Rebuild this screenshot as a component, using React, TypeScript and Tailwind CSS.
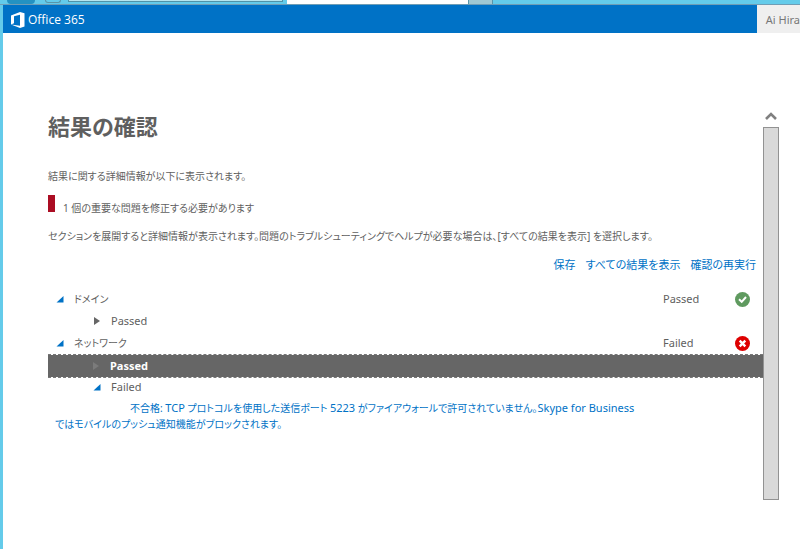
import React from 'react';

function Expander({ open, className }: { open: boolean; className: string }) {
  return (
    <svg viewBox="0 0 8 8" className={`h-2 w-2 shrink-0 ${className}`} aria-hidden="true">
      {open ? <path d="M7.5 1V7.5H0.5Z" fill="currentColor" /> : <path d="M1 0V8L7 4Z" fill="currentColor" />}
    </svg>
  );
}

function StatusIcon({ passed }: { passed: boolean }) {
  return (
    <svg viewBox="0 0 15 15" className="h-[15px] w-[15px]" aria-hidden="true">
      <circle cx="7.5" cy="7.5" r="7.5" fill={passed ? '#5f9a5f' : '#de0000'} />
      {passed ? (
        <path d="M4 7.3L6.7 9.8L11 5" fill="none" stroke="#fff" strokeWidth="2" />
      ) : (
        <path d="M4.7 4.7L10.3 10.3M10.3 4.7L4.7 10.3" fill="none" stroke="#fff" strokeWidth="2.4" />
      )}
    </svg>
  );
}

function SectionRow({ title, passed }: { title: string; passed: boolean }) {
  return (
    <div className="flex h-[22px] items-center pl-2">
      <button type="button" aria-expanded="true" className="flex flex-1 items-center gap-2.5">
        <Expander open className="text-[#0072c6]" />
        <span className="text-[10px]">{title}</span>
      </button>
      <span className="w-[72px]">{passed ? 'Passed' : 'Failed'}</span>
      <span className="w-7">
        <StatusIcon passed={passed} />
      </span>
    </div>
  );
}

export default function App() {
  return (
    <div className="min-h-screen bg-[#64cbea] font-['Noto_Sans','Noto_Sans_CJK_JP',sans-serif] text-[11px] leading-4 text-[#5f5f5f]">
      {/* Browser toolbar edge */}
      <div className="flex h-[5px] items-start overflow-hidden border-b border-[#6f9db5]">
        <div className="ml-[7px] h-1 w-7 rounded-b-full bg-[#2492c2]" />
        <div className="ml-2.5 h-[3px] w-4 rounded-b-full border border-t-0 border-[#5795aa]" />
        <div className="ml-[7px] h-0.5 w-[215px] border-x border-b border-[#4f93a8] bg-[#b5e4ee]" />
        <div className="ml-1 h-1 w-[181px] bg-white" />
        <div className="h-1 w-[25px] border-x border-[#5795aa] bg-[#9fc8d3]" />
      </div>

      <div className="ml-[3px] min-h-[calc(100vh-5px)] bg-white">
        <header className="flex h-7 items-stretch bg-[#0072c6] text-white">
          <a href="#" className="flex flex-1 items-center gap-[3px] pt-0.5 pl-2">
            <svg viewBox="0 0 14 16" className="h-4 w-3.5" aria-hidden="true">
              <path
                d="M0 3.4L9 0L13.5 1.3V14.6L9 16L0 12.6L9 13.7V2.8L3 4.2V11.2L0 12.6Z"
                fill="currentColor"
              />
            </svg>
            <span className="font-['Open_Sans',sans-serif] text-[12px]">Office 365</span>
          </a>
          <button
            type="button"
            className="bg-[#efefef] pt-0.5 pl-[9px] text-left text-[11px] whitespace-nowrap text-[#777777]"
          >
            Ai Hira
          </button>
        </header>

        <div className="flex pt-[76px] pr-[21px] pl-[45px]">
          <main className="min-w-0 flex-1 [font-feature-settings:'palt']">
            <h1 className="text-[22px] leading-[34px] font-bold">結果の確認</h1>
            <div className="text-[10px]">
              <p className="mt-[25px]">結果に関する詳細情報が以下に表示されます。</p>
              <div className="mt-[11px] flex items-start gap-2">
                <span className="h-[17px] w-[7px] bg-[#ab0d23]" />
                <p className="pt-[5px]">1 個の重要な問題を修正する必要があります</p>
              </div>
              <p className="mt-3">
                セクションを展開すると詳細情報が表示されます。問題のトラブルシューティングでヘルプが必要な場合は、[すべての結果を表示] を選択します。
              </p>
            </div>
            <div className="mt-[13px] flex justify-end gap-2.5 pr-[7px] text-[#0072c6]">
              <button type="button">保存</button>
              <button type="button">すべての結果を表示</button>
              <button type="button">確認の再実行</button>
            </div>

            <div className="mt-[15px]">
              <SectionRow title="ドメイン" passed />
              <button type="button" aria-expanded="false" className="flex h-[22px] w-full items-center gap-2.5 pl-[45px]">
                <Expander open={false} className="text-[#666666]" />
                <span>Passed</span>
              </button>
              <SectionRow title="ネットワーク" passed={false} />
              <button
                type="button"
                aria-expanded="false"
                className="flex h-6 w-full items-center gap-2.5 border-y border-dashed border-[#777777] bg-[#666666] bg-clip-padding pl-11 font-bold text-white"
              >
                <Expander open={false} className="text-[#7b7b7b]" />
                <span>Passed</span>
              </button>
              <button type="button" aria-expanded="true" className="flex h-[18px] w-full items-center gap-2.5 pl-[45px]">
                <Expander open className="text-[#0072c6]" />
                <span>Failed</span>
              </button>
              <a href="#" className="mt-1 block pr-[100px] pl-[7px] indent-[75px] text-[10px] text-[#0072c6]">
                不合格: <span className="text-[11px]">TCP</span> プロトコルを使用した送信ポート{' '}
                <span className="text-[11px]">5223</span> がファイアウォールで許可されていません。
                <span className="text-[11px]">Skype for Business</span>
                <br />
                ではモバイルのプッシュ通知機能がブロックされます。
              </a>
            </div>
          </main>

          <div className="flex w-4 flex-col items-center">
            <button type="button" aria-label="Scroll up" className="flex h-[18px] items-start pt-0.5">
              <svg viewBox="0 0 12 10" className="h-2.5 w-3" aria-hidden="true">
                <path d="M1 8L6 3L11 8" fill="none" stroke="#808080" strokeWidth="2.6" />
              </svg>
            </button>
            <div className="h-[373px] w-full border border-[#929292] bg-[#d9d9d9]" />
          </div>
        </div>
      </div>
    </div>
  );
}
